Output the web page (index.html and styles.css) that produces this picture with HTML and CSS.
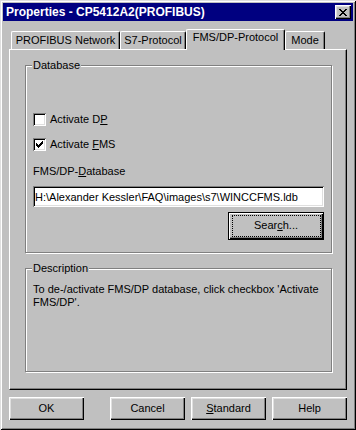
FILE: index.html
```html
<!DOCTYPE html>
<html lang="en">
<head>
	<meta charset="UTF-8">
	<title>Properties - CP5412A2(PROFIBUS)</title>
	<link rel="stylesheet" href="styles.css">
</head>
<body>
	<div class="window">
		<div class="titlebar">
			<span class="title">Properties - CP5412A2(PROFIBUS)</span>
			<span class="close">
				<svg width="8" height="7" viewBox="0 0 8 7" shape-rendering="crispEdges">
					<path d="M0 0h2v1H0z M6 0h2v1H6z M1 1h2v1H1z M5 1h2v1H5z M2 2h4v1H2z M3 3h2v1H3z M2 4h4v1H2z M1 5h2v1H1z M5 5h2v1H5z M0 6h2v1H0z M6 6h2v1H6z" fill="#000"/>
				</svg>
			</span>
		</div>

		<div class="client">
			<div class="tabs">
				<div class="tab tab-network">PROFIBUS Network</div>
				<div class="tab tab-s7">S7-Protocol</div>
				<div class="tab tab-fms active">FMS/DP-Protocol</div>
				<div class="tab tab-mode">Mode</div>
			</div>

			<div class="panel">
				<div class="group group-db">
					<div class="legend">Database</div>

					<label class="check check-dp">
						<span class="box"></span>
						<span>Activate D<u>P</u></span>
					</label>
					<label class="check check-fms">
						<span class="box">
							<svg width="13" height="13" viewBox="0 0 13 13" shape-rendering="crispEdges">
								<path d="M9 3h1v1H9z M8 4h2v1H8z M3 5h1v1H3z M7 5h3v1H7z M3 6h2v1H3z M6 6h3v1H6z M3 7h5v1H3z M4 8h3v1H4z M5 9h1v1H5z" fill="#000"/>
							</svg>
						</span>
						<span>Activate <u>F</u>MS</span>
					</label>

					<div class="field-label">FMS/DP-<u>D</u>atabase</div>
					<input type="text" class="field" value="H:\Alexander Kessler\FAQ\images\s7\WINCCFMS.ldb">

					<div class="search-row">
						<button class="btn btn-search">Sear<u>c</u>h...</button>
					</div>
				</div>

				<div class="group group-desc">
					<div class="legend">Description</div>
					<p class="desc">To de-/activate FMS/DP database, click checkbox 'Activate<br>FMS/DP'.</p>
				</div>
			</div>

			<div class="buttons">
				<button class="btn btn-ok">OK</button>
				<button class="btn">Cancel</button>
				<button class="btn"><u>S</u>tandard</button>
				<button class="btn">Help</button>
			</div>
		</div>
	</div>
</body>
</html>
```

FILE: styles.css
```css
* {
	padding: 0;
	margin: 0;
	box-sizing: border-box;
}

body {
	background: #c0c0c0;
	font: 11px/13px "Liberation Sans", Arial, sans-serif;
	color: #000;
}

u {
	text-underline-offset: 1px;
}

.window {
	width: 356px;
	height: 430px;
	padding: 3px;
	background: #c0c0c0;
	box-shadow: inset 1px 1px #dfdfdf, inset -1px -1px #000, inset 2px 2px #fff, inset -2px -2px #808080;
}

/* barra de titulo */
.titlebar {
	height: 18px;
	display: flex;
	align-items: center;
	justify-content: space-between;
	padding-left: 3px;
	background: #000080;
	color: #fff;
	font-size: 12px;
	font-weight: bold;
}

.close {
	width: 16px;
	height: 14px;
	margin-right: 2px;
	display: flex;
	align-items: center;
	justify-content: center;
	background: #c0c0c0;
	box-shadow: inset 1px 1px #fff, inset -1px -1px #000, inset -2px -2px #808080, inset 2px 2px #dfdfdf;
}

.client {
	padding: 8px 6px 0 6px;
}

/* abas */
.tabs {
	height: 20px;
	display: flex;
	align-items: flex-end;
	padding-left: 2px;
}

.tab {
	height: 18px;
	padding-top: 2px;
	text-align: center;
	border: 1px solid #fff;
	border-right-color: #000;
	border-bottom: none;
	border-radius: 2px 2px 0 0;
	box-shadow: inset -1px 0 #808080;
	background: #c0c0c0;
	white-space: nowrap;
}

.tab-network { width: 109px; }
.tab-s7 { width: 66px; }
.tab-fms { width: 99px; }
.tab-mode { width: 40px; }

.tab.active {
	position: relative;
	z-index: 1;
	height: 21px;
	margin-bottom: -1px;
	padding-top: 1px;
}

.panel {
	width: 338px;
	height: 341px;
	padding: 15px 0 0 15px;
	border: 1px solid #fff;
	border-right-color: #000;
	border-bottom-color: #000;
	box-shadow: inset -1px -1px #808080;
}

/* caixas de grupo */
.group {
	width: 307px;
	padding: 0 7px;
	border: 1px solid #808080;
	box-shadow: inset 1px 1px #fff, 1px 1px #fff;
}

.group-db {
	height: 188px;
}

.group-desc {
	height: 104px;
	margin-top: 15px;
}

.legend {
	width: fit-content;
	margin: -7px 0 0 -1px;
	padding: 0 1px;
	background: #c0c0c0;
}

.check {
	display: flex;
	align-items: center;
	height: 13px;
}

.check-dp {
	margin-top: 41px;
}

.check-fms {
	margin-top: 12px;
}

.box {
	display: block;
	width: 13px;
	height: 13px;
	margin-right: 4px;
	background: #fff;
	box-shadow: inset 1px 1px #808080, inset -1px -1px #fff, inset 2px 2px #000, inset -2px -2px #dfdfdf;
}

.box svg {
	display: block;
}

.field-label {
	margin-top: 14px;
}

.field {
	display: block;
	width: 291px;
	height: 21px;
	margin-top: 8px;
	padding: 0 2px;
	border: none;
	outline: none;
	background: #fff;
	font: inherit;
	color: #000;
	box-shadow: inset 1px 1px #808080, inset -1px -1px #fff, inset 2px 2px #000, inset -2px -2px #dfdfdf;
}

.search-row {
	display: flex;
	justify-content: flex-end;
	margin-top: 5px;
}

.desc {
	margin-top: 8px;
	white-space: nowrap;
}

/* botoes */
.btn {
	width: 75px;
	height: 23px;
	padding-bottom: 1px;
	border: none;
	background: #c0c0c0;
	font: inherit;
	color: #000;
	box-shadow: inset 1px 1px #fff, inset -1px -1px #000, inset -2px -2px #808080, inset 2px 2px #dfdfdf;
}

.btn-search {
	position: relative;
	width: 96px;
	height: 28px;
	border: 1px solid #000;
	box-shadow: inset 1px 1px #fff, inset -1px -1px #000, inset -2px -2px #808080;
}

.btn-search:after {
	content: '';
	position: absolute;
	top: 2px;
	left: 3px;
	right: 2px;
	bottom: 2px;
	border: 1px dotted #000;
}

.buttons {
	display: flex;
	gap: 6px;
	margin-top: 7px;
}

.btn-ok {
	margin-right: 20px;
}
```
